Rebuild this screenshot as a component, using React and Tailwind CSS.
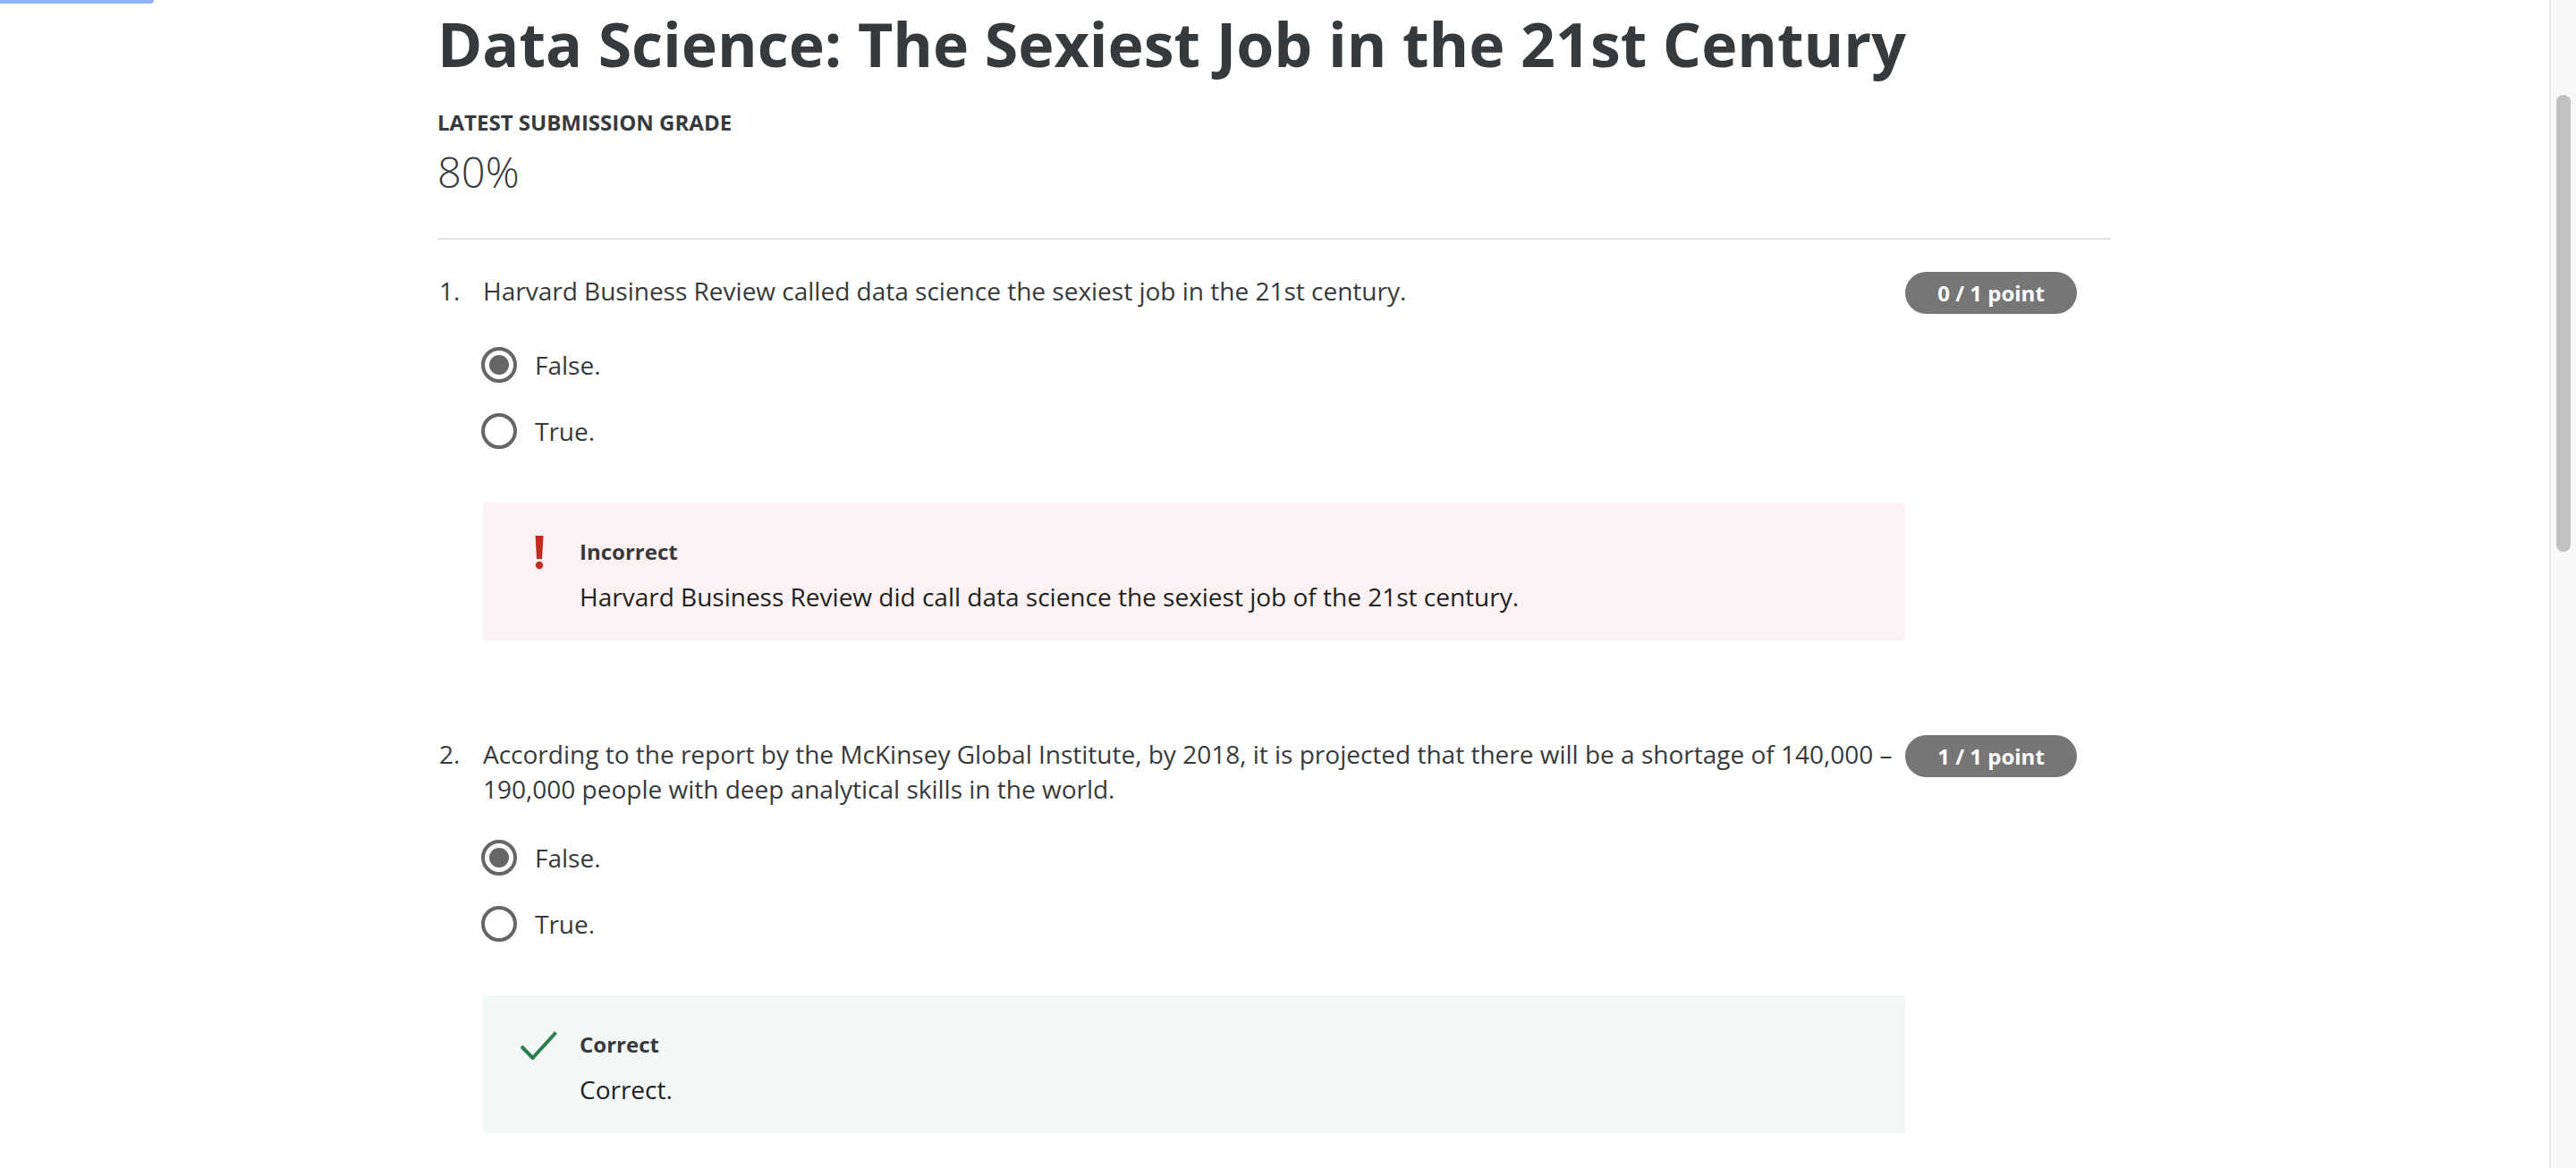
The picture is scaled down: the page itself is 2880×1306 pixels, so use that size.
import React from "react";

function Radio({ checked }) {
  return (
    <div className="w-[40px] h-[40px] rounded-full border-[4px] border-[#666666] flex items-center justify-center shrink-0">
      {checked && <div className="w-[22px] h-[22px] rounded-full bg-[#666666]" />}
    </div>
  );
}

function Option({ checked, label }) {
  return (
    <div className="h-[74px] flex items-center gap-[20px] pl-[49px]">
      <Radio checked={checked} />
      <span className="text-[28px] leading-[39px] text-[#373a3c]">{label}</span>
    </div>
  );
}

function Badge({ text }) {
  return (
    <div className="shrink-0 w-[192px] h-[47px] rounded-full bg-[#767676] text-white font-bold text-[24px] flex items-center justify-center mr-[38px]">
      {text}
    </div>
  );
}

function ExclaimIcon() {
  return (
    <svg width="12" height="38" viewBox="0 0 12 38" className="block">
      <path d="M1.5 0 H10.5 L9 26 H3 Z" fill="#c42b1c" />
      <circle cx="6" cy="33" r="4.2" fill="#c42b1c" />
    </svg>
  );
}

function CheckIcon() {
  return (
    <svg width="42" height="32" viewBox="0 0 42 32" className="block">
      <path d="M2 17 L14.5 30 L40.5 1.5" fill="none" stroke="#2e7d4f" strokeWidth="4" strokeLinejoin="miter" strokeLinecap="butt" />
    </svg>
  );
}

function Feedback({ kind, title, body }) {
  const isBad = kind === "bad";
  return (
    <div
      className={
        "ml-[51px] w-[1590px] h-[154px] flex " + (isBad ? "bg-[#fcf2f3]" : "bg-[#f2f8f6]")
      }
    >
      <div className="w-[108px] shrink-0 relative">
        {isBad ? (
          <div className="pt-[37px] pl-[57px]">
            <ExclaimIcon />
          </div>
        ) : (
          <div className="pt-[40px] pl-[41px]">
            <CheckIcon />
          </div>
        )}
      </div>
      <div className="pt-[39px]">
        <div className="text-[24px] leading-[32px] font-bold text-[#373a3c]">{title}</div>
        <div className="mt-[15px] text-[28px] leading-[39px] text-[#1f1f1f]">{body}</div>
      </div>
    </div>
  );
}

function Question({ num, text, badge, feedback }) {
  return (
    <div>
      <div className="flex items-start">
        <div className="w-[51px] shrink-0 pl-[2px] pt-[2px] text-[28px] leading-[39px] text-[#373a3c]">{num}.</div>
        <div className="flex-1 pt-[2px] pr-[6px] text-[28px] leading-[39px] text-[#373a3c]">{text}</div>
        <Badge text={badge} />
      </div>
      <div className="mt-[20px]">
        <Option checked label="False." />
        <Option label="True." />
      </div>
      <div className="mt-[43px]">{feedback}</div>
    </div>
  );
}

export default function App() {
  return (
    <div className="w-[2880px] h-[1306px] overflow-hidden bg-white flex font-['Open_Sans',sans-serif]">
      <div className="flex-1 relative">
        <div className="absolute left-0 top-0 w-[172px] h-[4px] bg-[#8fb3f7] rounded-br-[4px]" />
        <div className="ml-[489px] w-[1871px]">
          <h1 className="pt-[9px] text-[68px] leading-[80px] font-bold text-[#373a3c]">
            Data Science: The Sexiest Job in the 21st Century
          </h1>
          <div className="mt-[32px] text-[24px] leading-[32px] font-bold text-[#373a3c] uppercase">
            Latest Submission Grade
          </div>
          <div className="mt-[9px] text-[47px] leading-[60px] font-light text-[#373a3c]">80%</div>
          <div className="mt-[44px] h-[2px] bg-[#e1e1e1]" />
          <div className="mt-[36px]">
            <Question
              num={1}
              text="Harvard Business Review called data science the sexiest job in the 21st century."
              badge="0 / 1 point"
              feedback={
                <Feedback
                  kind="bad"
                  title="Incorrect"
                  body="Harvard Business Review did call data science the sexiest job of the 21st century."
                />
              }
            />
          </div>
          <div className="mt-[106px]">
            <Question
              num={2}
              text={"According to the report by the McKinsey Global Institute, by 2018, it is projected that there will be a shortage of 140,000\u00a0– 190,000 people with deep analytical skills in the world."}
              badge="1 / 1 point"
              feedback={<Feedback kind="good" title="Correct" body="Correct." />}
            />
          </div>
        </div>
      </div>
      <div className="w-[30px] shrink-0 bg-[#f8f8f8] border-l-[2px] border-[#e8e8e8] flex justify-center">
        <div className="mt-[106px] w-[16px] h-[511px] rounded-full bg-[#c1c1c1]" />
      </div>
    </div>
  );
}
